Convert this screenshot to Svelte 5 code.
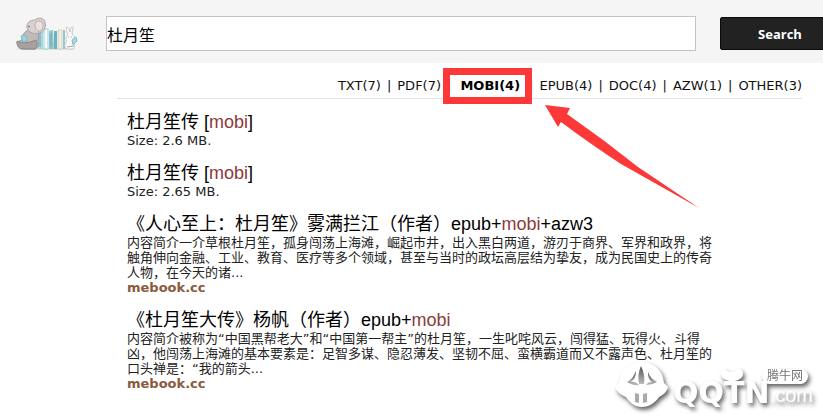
<script>
    let query = $state('杜月笙');

    const filters = [
        { name: 'TXT', count: 7 },
        { name: 'PDF', count: 7 },
        { name: 'MOBI', count: 4, active: true },
        { name: 'EPUB', count: 4 },
        { name: 'DOC', count: 4 },
        { name: 'AZW', count: 1 },
        { name: 'OTHER', count: 3 }
    ];

    const results = [
        { title: ['杜月笙传 [', 'mobi', ']'], text: 'Size: 2.6 MB.' },
        { title: ['杜月笙传 [', 'mobi', ']'], text: 'Size: 2.65 MB.' },
        {
            title: ['《人心至上：杜月笙》雾满拦江（作者）epub+', 'mobi', '+azw3'],
            text: '内容简介一介草根杜月笙，孤身闯荡上海滩，崛起市井，出入黑白两道，游刃于商界、军界和政界，将触角伸向金融、工业、教育、医疗等多个领域，甚至与当时的政坛高层结为挚友，成为民国史上的传奇人物，在今天的诸...',
            site: 'mebook.cc'
        },
        {
            title: ['《杜月笙大传》杨帆（作者）epub+', 'mobi', ''],
            text: '内容简介被称为“中国黑帮老大”和“中国第一帮主”的杜月笙，一生叱咤风云，闯得猛、玩得火、斗得凶，他闯荡上海滩的基本要素是：足智多谋、隐忍薄发、坚韧不屈、蛮横霸道而又不露声色、杜月笙的口头禅是：“我的箭头...',
            site: 'mebook.cc'
        }
    ];
</script>

<div class="page" lang="zh-CN">
    <form class="header" onsubmit={(e) => e.preventDefault()}>
        <a class="logo" href="/" aria-label="Home">
            <svg width="62" height="36" viewBox="0 0 62 36">
                <ellipse cx="30" cy="33" rx="30" ry="1" fill="#e2e0df" />
                <!-- books -->
                <path d="M22 16l5-1v18h-5z" fill="#a9d7de" />
                <path d="M28 13h4v20h-4z" fill="#f4fafa" stroke="#a5d0d6" />
                <path d="M33 15l4-1 1 19h-5z" fill="#8ec6cf" />
                <path d="M38 15h3v18h-3z" fill="#6db3bf" />
                <path d="M42 14h4v19h-4z" fill="#f2edda" stroke="#d3d2c4" />
                <path d="M47 14h2v19h-2z" fill="#8fc9d2" />
                <path d="M24 17v14M35 17v14M39 18v3" stroke="#69aab6" fill="none" />
                <!-- bear -->
                <path d="M12 14c-5 3-6 6-6 10l-5 2c0 4 2 7 6 7h12c4-1 4-5 3-9l1-8z" fill="#c2bab9" stroke="#a29a9b" />
                <path d="M11 12c-1-5 3-8 8-8 2-2 6-3 9 0 2 3 2 7 0 10-4 5-15 5-17-2z" fill="#d8d1cf" stroke="#aea4a4" />
                <path d="M20 6c2-2 6-1 7 2 1 4-2 8-5 7-3-2-4-6-2-9z" fill="#e9e1de" stroke="#b8aeae" />
                <path d="M1 25c5 3 12 2 19-1 2 4 1 7-1 9H7c-4 0-6-3-6-8z" fill="#a8a0a0" stroke="#8d8587" />
                <path d="M5 20l4-1 3 5-5 2z" fill="#9bd3df" stroke="#83bcc8" />
                <path d="M12 10l2 1" stroke="#6b6265" />
                <!-- rabbit -->
                <path d="M52 19c-2-5-2-8-1-8 2 1 3 4 3 5 0-4 2-6 3-5 0 3-1 5-1 7 3 2 3 5 1 7 2 3 2 6 0 8h-7c-2-3-1-6 1-8-2-2-1-5 1-6z" fill="#f8f8f7" stroke="#cbc8c7" />
                <path d="M56 24l4-3 1 4-4 4z" fill="#a5dae5" stroke="#7cbdcb" />
                <path d="M52 21h1M55 21h1M51 31l7-1" stroke="#aaa" />
            </svg>
        </a>
        <input type="text" aria-label="Search" bind:value={query} />
        <button type="submit">Search</button>
    </form>

    <main>
        <nav class="filters">
            {#each filters as filter, i}
                {#if i > 0}<span class="sep">|</span>{/if}
                <span class="filter" class:active={filter.active}>
                    <a href="#{filter.name}">{filter.name}({filter.count})</a>
                    {#if filter.active}
                        <span class="marker"></span>
                        <svg class="arrow" width="154" height="104" viewBox="0 0 154 104">
                            <path d="M0 0L25 3 22 9Q58 34 93 62L154 103 76 59Q44 38 16 17L13 22z" fill="#fd3838" />
                        </svg>
                    {/if}
                </span>
            {/each}
        </nav>

        <div class="results">
            {#each results as result}
                <article>
                    <h2><a href="#result">{result.title[0]}<em>{result.title[1]}</em>{result.title[2]}</a></h2>
                    <p>{result.text}</p>
                    {#if result.site}
                        <a class="site" href="#site">{result.site}</a>
                    {/if}
                </article>
            {/each}
        </div>
    </main>

    <div class="watermark">
        <svg class="bull" width="54" height="46" viewBox="0 0 54 46">
            <defs>
                <linearGradient id="shade" x1="0" y1="0" x2="0" y2="1">
                    <stop offset="0" stop-color="#555" />
                    <stop offset="1" stop-color="#bbb" />
                </linearGradient>
            </defs>
            <path d="M4 21C5 8 15 0 27 0s21 8 22 21l4 4c-1 5-5 8-9 10-4 6-10 10-17 10S15 41 11 35C6 33 2 30 0 25z" fill="#fff" />
            <path d="M21 9c0 6-2 10-7 11 5-1 8 1 10 3-4 1-9-1-12-3 4-2 7-6 9-11z" fill="url(#shade)" />
            <path d="M26 4c-3 7-3 12-2 18h5c1-6 0-12-3-18z" fill="url(#shade)" />
            <path d="M33 10c2 5 5 8 9 10-3 2-7 3-11 3 1-2 3-3 6-3-3-2-4-5-4-10z" fill="url(#shade)" />
            <path d="M20 31l4 1v9l-4-1zM28 32l4-1v9l-4 1z" fill="#aaa" />
        </svg>
        <span class="brand">QQTN</span>
        <span class="com">.com</span>
        <svg class="head" width="24" height="16" viewBox="0 0 24 16">
            <path d="M5 0c1 5 12 5 14 0 7 4 5 13-7 13S-2 4 5 0z" fill="#fff" />
        </svg>
        <span class="tag">腾牛网</span>
    </div>
</div>

<style>
    :global(body) {
        background: #fff;
    }

    .page {
        position: relative;
        min-height: 100vh;
        overflow: hidden;
        font: 13px/15px "DejaVu Sans", "Noto Sans CJK SC", sans-serif;
        color: #222;
    }

    a {
        color: inherit;
        text-decoration: none;
    }

    .header {
        display: flex;
        align-items: center;
        height: 63px;
        padding-left: 16px;
        margin-right: -17px;
        padding-top: 4px;
        box-sizing: border-box;
        background: #f5f5f5;
    }

    .logo {
        display: flex;
        margin-right: 28px;
    }

    .header input {
        flex: 1;
        min-width: 0;
        height: 35px;
        box-sizing: border-box;
        padding: 0;
        border: 1px solid #c4c4c4;
        background: #fff;
        color: #000;
        font: 16px "Liberation Sans", "Noto Sans CJK SC", sans-serif;
    }

    .header button {
        width: 120px;
        height: 33px;
        margin-left: 24px;
        border: 1px solid #0a0a0a;
        border-radius: 2px;
        background: #222;
        color: #fff;
        font: bold 13px "Open Sans", sans-serif;
    }

    main {
        margin: 0 21px 0 117px;
    }

    .filters {
        display: flex;
        justify-content: flex-end;
        gap: 6px;
        padding: 15px 0 5px;
        border-bottom: 1px solid #e2e2e2;
        color: #111;
    }

    .filter {
        position: relative;
    }

    .filter.active {
        padding: 0 3px;
        font-weight: bold;
        color: #000;
    }

    /* red frame around the chosen format */
    .marker {
        position: absolute;
        inset: -10px -9px -11px -14px;
        border: 7px solid #fd3838;
    }

    .arrow {
        position: absolute;
        left: 88px;
        top: 27px;
    }

    .results {
        max-width: 586px;
        padding: 13px 0 0 10px;
    }

    article {
        margin-bottom: 15px;
    }

    h2 {
        margin: 0;
        font: 18px/21px "Liberation Sans", "Noto Sans CJK SC", sans-serif;
        color: #000;
    }

    h2 em {
        font-style: normal;
        color: #8b3a3a;
    }

    p {
        margin: 0;
    }

    .site {
        display: block;
        font-weight: bold;
        color: #8b5a3c;
    }

    /* site stamp in the corner, over the list */
    .watermark {
        position: absolute;
        right: 10px;
        bottom: 8px;
        display: flex;
        align-items: flex-end;
        color: #fff;
        filter: drop-shadow(2px 3px 2px #666);
    }

    .bull {
        margin-right: 4px;
    }

    .brand {
        font: bold 30px/30px "DejaVu Sans", sans-serif;
    }

    .com {
        font: 20px/26px "Liberation Sans", sans-serif;
    }

    .head {
        position: absolute;
        right: 69px;
        top: 6px;
    }

    .tag {
        position: absolute;
        right: 5px;
        top: 7px;
        padding: 0 5px;
        border-radius: 8px;
        background: #fff;
        color: #777;
        font-size: 12px;
    }
</style>
